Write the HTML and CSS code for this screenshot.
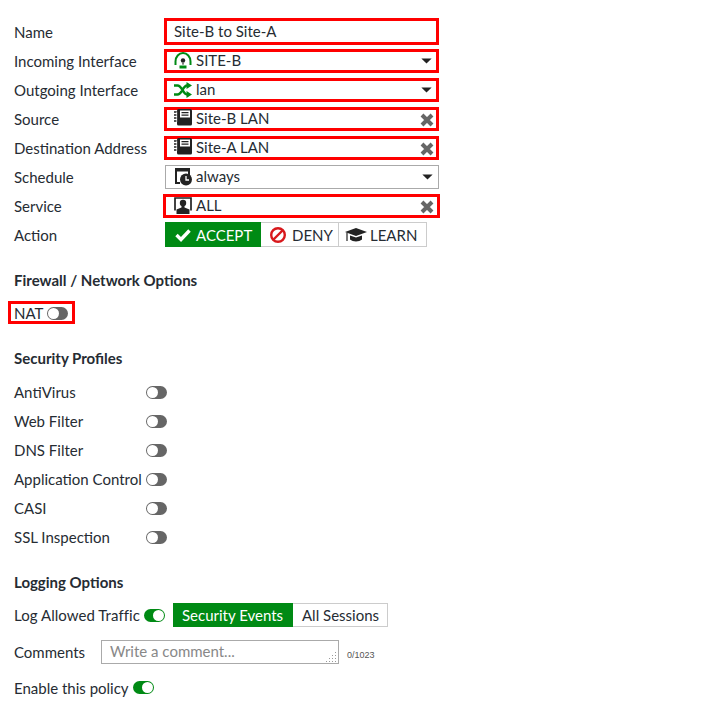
FILE: index.html
```html
<!DOCTYPE html>
<html lang="en">
<head>
    <meta charset="UTF-8">
    <title>Edit Policy</title>
    <link rel="stylesheet" href="styles.css">
</head>
<body>
    <svg class="defs" width="0" height="0">
        <symbol id="i-book" viewBox="0 0 18 18">
            <path fill="#222" d="M3 1.500Q3 0 4.500 0H16.500Q18 0 18 1.500V15Q18 16.500 16.500 16.500H4.500Q3 16.500 3 15Z"/>
            <path fill="#fff" d="M6 1.500H16V8.500H6Z"/>
            <path fill="#222" d="M7.500 3H14.500V4.200H7.500ZM7.500 5.600H14.500V6.800H7.500Z"/>
            <path fill="none" stroke="#222" stroke-width="1.400" d="M0 3H4M0 6H4M0 9H4M0 12H4"/>
            <path fill="none" stroke="#fff" stroke-width=".7" d="M2.700 2.500V13"/>
        </symbol>
        <symbol id="i-x" viewBox="0 0 14 14">
            <path fill="none" stroke="#666" stroke-width="4" d="M2 2L12 12M12 2L2 12"/>
        </symbol>
        <symbol id="i-caret" viewBox="0 0 12 7">
            <path fill="#222" d="M0 .5H12L6 6.500Z"/>
        </symbol>
    </svg>

    <div class="form">
        <div class="row">
            <label class="lbl">Name</label>
            <div class="field boxed tall"><span class="val">Site-B to Site-A</span></div>
        </div>
        <div class="row">
            <label class="lbl">Incoming Interface</label>
            <div class="field boxed">
                <svg class="ico" viewBox="0 0 18 18">
                    <path fill="none" stroke="#008a14" stroke-width="2" d="M1.500 13V9.500A7.500 8.500 0 0 1 16.500 9.500V13"/>
                    <circle cx="9" cy="8.500" r="2.200" fill="#222"/>
                    <path fill="#555" d="M8 11.200H10V12.500H8Z"/>
                    <path fill="#008a14" d="M5.500 13.500H12.500V16.500H5.500Z"/>
                </svg>
                <span class="val">SITE-B</span>
                <svg class="caret"><use href="#i-caret"/></svg>
            </div>
        </div>
        <div class="row">
            <label class="lbl">Outgoing Interface</label>
            <div class="field boxed">
                <svg class="ico" viewBox="0 0 18 18">
                    <path fill="none" stroke="#008a14" stroke-width="2.400" d="M0 4.500H3.500C8 4.500 9 13.500 13 13.500H15M0 13.500H3.500C8 13.500 9 4.500 13 4.500H15"/>
                    <path fill="#008a14" d="M12.500 1L18 4.500L12.500 8ZM12.500 10L18 13.500L12.500 17Z"/>
                </svg>
                <span class="val">lan</span>
                <svg class="caret"><use href="#i-caret"/></svg>
            </div>
        </div>
        <div class="row">
            <label class="lbl">Source</label>
            <div class="field boxed">
                <svg class="ico book"><use href="#i-book"/></svg>
                <span class="val">Site-B LAN</span>
                <svg class="clear"><use href="#i-x"/></svg>
            </div>
        </div>
        <div class="row">
            <label class="lbl">Destination Address</label>
            <div class="field boxed">
                <svg class="ico book"><use href="#i-book"/></svg>
                <span class="val">Site-A LAN</span>
                <svg class="clear"><use href="#i-x"/></svg>
            </div>
        </div>
        <div class="row">
            <label class="lbl">Schedule</label>
            <div class="field plain">
                <svg class="ico" viewBox="0 0 18 18">
                    <path fill="none" stroke="#222" stroke-width="2" d="M6 15H2V1H15V7"/>
                    <path fill="#222" d="M2 1H15V3.500H2Z"/>
                    <circle cx="12" cy="11.500" r="6" fill="#222"/>
                    <path fill="none" stroke="#fff" stroke-width="1.300" d="M12 8V12H15"/>
                </svg>
                <span class="val">always</span>
                <svg class="caret"><use href="#i-caret"/></svg>
            </div>
        </div>
        <div class="row">
            <label class="lbl">Service</label>
            <div class="field boxed service">
                <svg class="ico" viewBox="0 0 18 18">
                    <path fill="none" stroke="#222" stroke-width="1.700" d="M1 13.500V1H17V13.500"/>
                    <circle cx="9" cy="6" r="3.200" fill="#222"/>
                    <path fill="#222" d="M7.500 8H10.500V10.500L15.500 12.500V17H2.500V12.500L7.500 10.500Z"/>
                </svg>
                <span class="val">ALL</span>
                <svg class="clear"><use href="#i-x"/></svg>
            </div>
        </div>
        <div class="row">
            <label class="lbl">Action</label>
            <div class="seg">
                <div class="seg-btn on accept">
                    <svg class="seg-ico" viewBox="0 0 16 14"><path fill="none" stroke="#fff" stroke-width="3.400" d="M1.500 7L6 11.500L14.500 2.500"/></svg>
                    ACCEPT
                </div>
                <div class="seg-btn deny">
                    <svg class="seg-ico" viewBox="0 0 16 16"><circle cx="8" cy="8" r="6.800" fill="none" stroke="#d8181c" stroke-width="2.400"/><path stroke="#d8181c" stroke-width="2.400" d="M3.500 12.500L12.500 3.500"/></svg>
                    DENY
                </div>
                <div class="seg-btn learn">
                    <svg class="cap" viewBox="0 0 22 16"><path fill="#222" d="M11 1L22 5L11 9L0 5Z"/><path fill="#222" d="M5 8.500L11 10.500L17 8.500V12.500C14 15 8 15 5 12.500Z"/><path stroke="#222" stroke-width="1.200" d="M2 5.500V14"/></svg>
                    LEARN
                </div>
            </div>
        </div>

        <h3 class="section fw-head">Firewall / Network Options</h3>
        <div class="nat-box">
            <span>NAT</span>
            <span class="toggle"></span>
        </div>

        <h3 class="section sec-head">Security Profiles</h3>
        <div class="row"><label class="lbl short">AntiVirus</label><span class="toggle"></span></div>
        <div class="row"><label class="lbl short">Web Filter</label><span class="toggle"></span></div>
        <div class="row"><label class="lbl short">DNS Filter</label><span class="toggle"></span></div>
        <div class="row"><label class="lbl short">Application Control</label><span class="toggle"></span></div>
        <div class="row"><label class="lbl short">CASI</label><span class="toggle"></span></div>
        <div class="row"><label class="lbl short">SSL Inspection</label><span class="toggle"></span></div>

        <h3 class="section log-head">Logging Options</h3>
        <div class="row log-row">
            <label class="lbl-log">Log Allowed Traffic</label>
            <span class="toggle active"></span>
            <div class="seg log-seg">
                <div class="seg-btn on">Security Events</div>
                <div class="seg-btn">All Sessions</div>
            </div>
        </div>
        <div class="row comment-row">
            <label class="lbl-comment">Comments</label>
            <div class="comment">
                <span>Write a comment...</span>
                <svg class="grip" viewBox="0 0 11 11"><path fill="#999" d="M9 1h1v1H9zM9 4h1v1H9zM6 4h1v1H6zM9 7h1v1H9zM6 7h1v1H6zM3 7h1v1H3zM9 10h1v1H9zM6 10h1v1H6zM3 10h1v1H3zM0 10h1v1H0z"/></svg>
            </div>
            <span class="count">0/1023</span>
        </div>
        <div class="row enable-row">
            <label class="lbl-enable">Enable this policy</label>
            <span class="toggle active"></span>
        </div>
    </div>
</body>
</html>
```

FILE: styles.css
```css
:root {
    --green: #008a14;
    --red: #f00;
    --line: #ccc;
    --ink: #262c33;
}

* {
    box-sizing: border-box;
}

body {
    margin: 0;
    background: #fff;
    color: var(--ink);
    font-family: "Lato", sans-serif;
    font-size: 15px;
    line-height: 18px;
}

.defs {
    position: absolute;
}

.form {
    padding: 17px 0 0 14px;
}

.row {
    display: flex;
    align-items: center;
    height: 29px;
}

.lbl {
    width: 150px;
    flex: none;
}

.lbl.short {
    width: 132px;
}

.field {
    display: flex;
    align-items: center;
    width: 275px;
    height: 24px;
    background: #fff;
}

.field.boxed {
    border: 3px solid var(--red);
    padding-left: 7px;
}

.field.plain {
    border: 1px solid #aaa;
    margin-left: 1px;
    width: 274px;
    padding-left: 8px;
}

.field.tall {
    height: 27px;
}

.field.service {
    width: 277px;
    margin-left: -1px;
    padding-left: 8px;
}

.ico {
    width: 18px;
    height: 18px;
    flex: none;
    margin-right: 4px;
}

.ico.book {
    margin-bottom: 2px;
}

.val {
    flex: 1;
    padding-bottom: 2px;
}

.caret {
    width: 11px;
    height: 6px;
    margin-right: 4px;
    flex: none;
}

.plain .caret {
    margin-right: 5px;
}

.clear {
    width: 14px;
    height: 14px;
    margin-right: 2px;
    margin-top: 2px;
    flex: none;
}

.service .clear {
    margin-right: 3px;
}

.seg {
    display: flex;
    height: 25px;
    margin-left: 1px;
}

.seg-btn {
    display: flex;
    align-items: center;
    height: 100%;
    padding: 0 8px;
    border: 1px solid var(--line);
    border-left: 0;
}

.seg-btn.on {
    background: var(--green);
    border-color: var(--green);
    color: #fff;
}

.accept {
    width: 96px;
    gap: 5px;
    padding: 0 0 0 10px;
}

.deny {
    width: 78px;
    gap: 6px;
    padding: 0 0 0 9px;
}

.learn {
    width: 88px;
    gap: 3px;
    padding: 0 0 0 6px;
}

.seg-ico {
    width: 16px;
    height: 16px;
    flex: none;
}

.cap {
    width: 22px;
    height: 16px;
    flex: none;
}

.section {
    margin: 0;
    font-size: 15px;
    font-weight: 700;
    line-height: 18px;
}

.fw-head {
    margin-top: 22px;
}

.nat-box {
    display: inline-flex;
    align-items: center;
    gap: 4px;
    height: 23px;
    margin: 12px 0 0 -6px;
    padding: 0 4px 0 3px;
    border: 3px solid var(--red);
}

.sec-head {
    margin-top: 25px;
    margin-bottom: 10px;
}

.log-head {
    margin-top: 22px;
    margin-bottom: 12px;
}

.toggle {
    position: relative;
    display: inline-block;
    flex: none;
    width: 21px;
    height: 13px;
    margin-top: 2px;
    border-radius: 7px;
    background: #666;
}

.toggle::after {
    content: "";
    position: absolute;
    top: 1px;
    left: 1px;
    width: 11px;
    height: 11px;
    border-radius: 50%;
    background: #fff;
}

.toggle.active {
    margin-top: 0;
    background: var(--green);
}

.toggle.active::after {
    left: 9px;
}

.log-row {
    height: 24px;
}

.lbl-log {
    width: 130px;
    letter-spacing: .05px;
}

.log-seg {
    height: 24px;
    margin-left: 8px;
}

.log-seg .seg-btn {
    padding: 0 8px 0 9px;
}

.log-seg .seg-btn.on {
    width: 120px;
}

.comment-row {
    height: 25px;
    margin-top: 12px;
}

.lbl-comment {
    width: 87px;
}

.comment {
    position: relative;
    width: 238px;
    height: 24px;
    border: 1px solid #aaa;
    padding: 1px 8px;
    color: #888;
}

.grip {
    position: absolute;
    right: 1px;
    bottom: 1px;
    width: 11px;
    height: 11px;
}

.count {
    margin: 6px 0 0 8px;
    font-family: "Liberation Sans", sans-serif;
    font-size: 9px;
    color: #555;
}

.lbl-enable {
    width: 119px;
}

.enable-row {
    margin-top: 11px;
    height: 25px;
}
```
